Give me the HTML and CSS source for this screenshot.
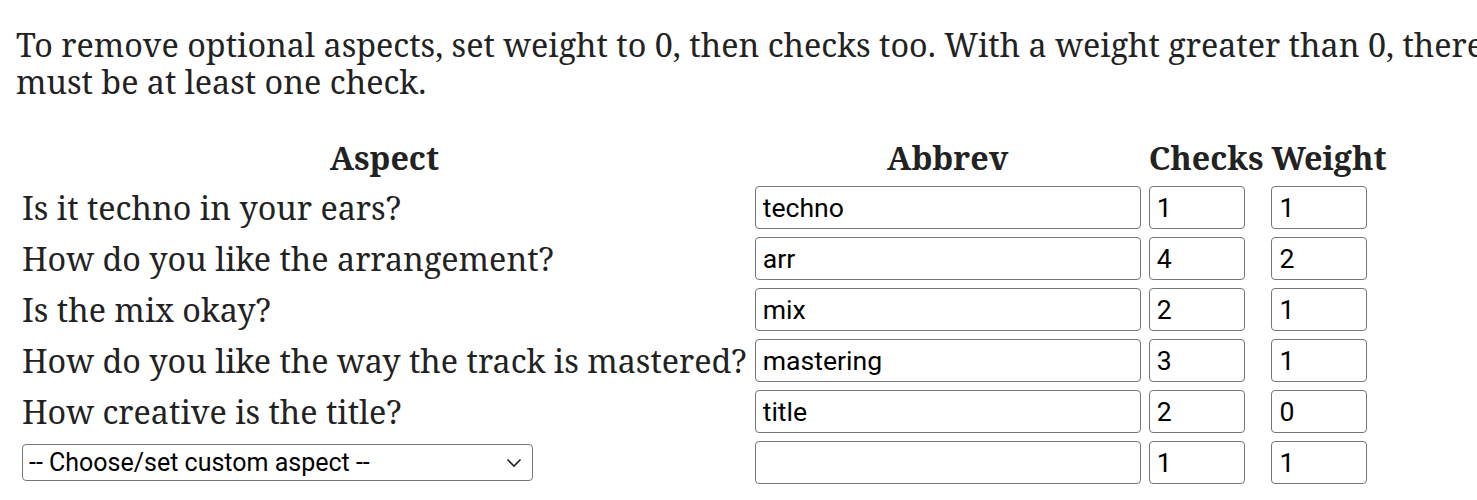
FILE: index.html
```html
<!DOCTYPE html>
<html lang="en">
<head>
<meta charset="utf-8">
<title>Aspects</title>
<link rel="stylesheet" href="styles.css">
</head>
<body>
<div class="page">
  <p class="intro">To remove optional aspects, set weight to 0, then checks too. With a weight greater than 0, there must be at least one check.</p>
  <table class="aspects">
    <thead>
      <tr><th>Aspect</th><th>Abbrev</th><th>Checks</th><th>Weight</th></tr>
    </thead>
    <tbody>
      <tr>
        <td class="label">Is it techno in your ears?</td>
        <td><input class="field abbrev" type="text" value="techno"></td>
        <td><input class="field num" type="text" value="1"></td>
        <td><input class="field num" type="text" value="1"></td>
      </tr>
      <tr>
        <td class="label">How do you like the arrangement?</td>
        <td><input class="field abbrev" type="text" value="arr"></td>
        <td><input class="field num" type="text" value="4"></td>
        <td><input class="field num" type="text" value="2"></td>
      </tr>
      <tr>
        <td class="label">Is the mix okay?</td>
        <td><input class="field abbrev" type="text" value="mix"></td>
        <td><input class="field num" type="text" value="2"></td>
        <td><input class="field num" type="text" value="1"></td>
      </tr>
      <tr>
        <td class="label">How do you like the way the track is mastered?</td>
        <td><input class="field abbrev" type="text" value="mastering"></td>
        <td><input class="field num" type="text" value="3"></td>
        <td><input class="field num" type="text" value="1"></td>
      </tr>
      <tr>
        <td class="label">How creative is the title?</td>
        <td><input class="field abbrev" type="text" value="title"></td>
        <td><input class="field num" type="text" value="2"></td>
        <td><input class="field num" type="text" value="0"></td>
      </tr>
      <tr>
        <td>
          <div class="select-wrap">
            <select class="custom">
              <option>-- Choose/set custom aspect --</option>
            </select>
            <svg class="chev" width="16" height="10" viewBox="0 0 16 10" aria-hidden="true"><path d="M1.5 1.5 L8 8 L14.5 1.5" fill="none" stroke="#222" stroke-width="1.6"/></svg>
          </div>
        </td>
        <td><input class="field abbrev" type="text" value=""></td>
        <td><input class="field num" type="text" value="1"></td>
        <td><input class="field num" type="text" value="1"></td>
      </tr>
    </tbody>
  </table>
</div>
</body>
</html>
```
FILE: styles.css
```css
html, body {
  overflow: hidden;
}
body {
  margin: 0;
  background: #fff;
  color: #222;
  font-family: "Noto Serif", "DejaVu Serif", serif;
  font-size: 32.3px;
}
.page {
  padding: 26px 0 0 16px;
}
.intro {
  margin: 0 0 33px 0;
  width: 1550px;
  line-height: 36.5px;
}
.aspects {
  border-collapse: separate;
  border-spacing: 4px;
}
.aspects th,
.aspects td {
  padding: 2px;
  vertical-align: middle;
  white-space: nowrap;
}
.aspects th {
  padding-bottom: 4px;
  font-weight: bold;
  text-align: center;
  line-height: 38px;
}
.aspects td {
  text-align: left;
  line-height: 37px;
}
.field {
  box-sizing: border-box;
  display: block;
  height: 43px;
  margin: 0;
  padding: 0 7px;
  border: 1.6px solid #767676;
  border-radius: 4px;
  background: #fff;
  color: #000;
  font-family: Roboto, "Liberation Sans", sans-serif;
  font-size: 26.6px;
}
.abbrev {
  width: 386px;
}
.num {
  width: 96px;
}
.select-wrap {
  position: relative;
  width: 511px;
}
.custom {
  -webkit-appearance: none;
  appearance: none;
  box-sizing: border-box;
  display: block;
  width: 511px;
  height: 37px;
  margin: 0;
  padding: 0 40px 0 6px;
  border: 1.6px solid #767676;
  border-radius: 4px;
  background: #fff;
  color: #000;
  font-family: Roboto, "Liberation Sans", sans-serif;
  font-size: 25px;
}
.chev {
  position: absolute;
  right: 11px;
  top: 14px;
  pointer-events: none;
}
```
